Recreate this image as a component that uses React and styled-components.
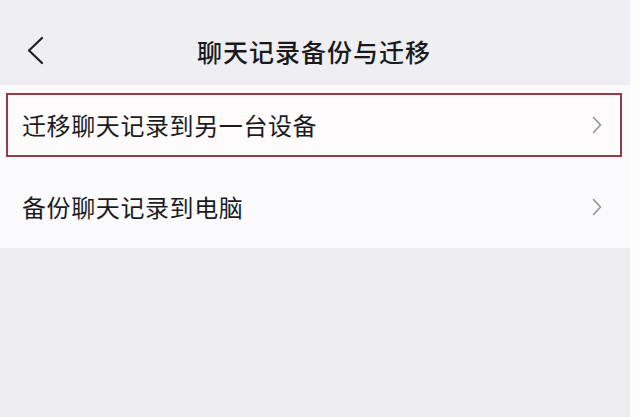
import React from 'react';
import styled, { createGlobalStyle } from 'styled-components';

const GlobalStyle = createGlobalStyle`
  html, body {
    margin: 0;
    padding: 0;
    background: #fdfdfe;
  }
  body {
    font-family: 'Noto Sans CJK SC', 'Noto Sans', sans-serif;
    color: #1b1b1d;
  }
`;

const items = [
  { label: '迁移聊天记录到另一台设备', highlighted: true },
  { label: '备份聊天记录到电脑', highlighted: false },
];

const App = () => {
  return (
    <>
      <GlobalStyle />
      <Screen>
        <Header>
          <BackButton>
            <svg width="18" height="29" viewBox="0 0 18 29" fill="none">
              <path
                d="M15 2 L2 14.5 L15 27"
                stroke="#1f1f21"
                strokeWidth="2.2"
                strokeLinecap="round"
                strokeLinejoin="round"
              />
            </svg>
          </BackButton>
          <Title>聊天记录备份与迁移</Title>
        </Header>
        <List>
          {items.map((item) => (
            <Row key={item.label}>
              <Frame $highlighted={item.highlighted}>
                <Label>{item.label}</Label>
                <svg width="10" height="18" viewBox="0 0 10 18" fill="none">
                  <path
                    d="M1.5 1.5 L8.5 9 L1.5 16.5"
                    stroke="#8e8e93"
                    strokeWidth="1.5"
                    strokeLinecap="round"
                    strokeLinejoin="round"
                  />
                </svg>
              </Frame>
            </Row>
          ))}
        </List>
        <Filler />
      </Screen>
    </>
  );
};

const Screen = styled.div`
  width: 630px;
  height: 417px;
  display: flex;
  flex-direction: column;
  background: #ededf1;
`;

const Header = styled.header`
  position: relative;
  height: 85px;
  box-sizing: border-box;
  padding-top: 18px;
  display: flex;
  align-items: center;
  justify-content: center;
  background: #efeff3;
`;

const BackButton = styled.div`
  position: absolute;
  left: 27px;
  top: 36px;
  display: flex;
`;

const Title = styled.h1`
  margin: 0;
  font-size: 25px;
  font-weight: 500;
  line-height: 1;
  letter-spacing: 1px;
  color: #1a1a1c;
  transform: translateX(-1px);
`;

const List = styled.div`
  display: flex;
  flex-direction: column;
  background: #fbfbfd;
`;

const Row = styled.div`
  height: 82px;
  box-sizing: border-box;
  padding: 8px 8px 9px 6px;
  &:last-child {
    height: 81px;
  }
`;

const Frame = styled.div`
  height: 64px;
  box-sizing: border-box;
  display: flex;
  align-items: center;
  justify-content: space-between;
  padding: 0 18px 0 14px;
  border: 2px solid ${({ $highlighted }) => ($highlighted ? '#983a44' : 'transparent')};
  background: ${({ $highlighted }) => ($highlighted ? '#fefbfc' : 'transparent')};
`;

const Label = styled.span`
  font-size: 24px;
  line-height: 1;
  color: #1b1b1d;
  letter-spacing: 0.6px;
`;

const Filler = styled.div`
  flex: 1;
  background: #ededf0;
`;

export default App;
